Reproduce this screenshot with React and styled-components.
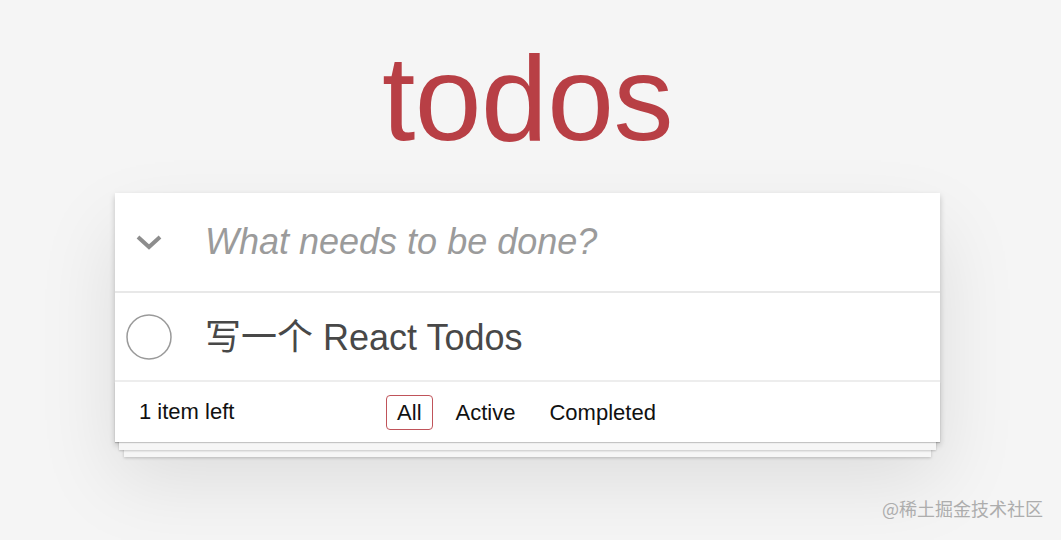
import React from 'react'
import styled, { createGlobalStyle } from 'styled-components'

const GlobalStyle = createGlobalStyle`
  html, body {
    margin: 0;
    padding: 0;
    background: #f5f5f5;
  }
  body {
    font-family: "Liberation Sans", Arial, "Noto Sans CJK SC", sans-serif;
    color: #111;
  }
`

const filters = ['All', 'Active', 'Completed']

function ChevronIcon() {
  return (
    <svg width="26" height="15" viewBox="0 0 26 15">
      <polyline points="2,2 13,12 24,2" fill="none" stroke="#8d8d8d" strokeWidth="4" />
    </svg>
  )
}

function CircleIcon() {
  return (
    <svg width="46" height="46" viewBox="0 0 46 46">
      <circle cx="23" cy="23" r="22" fill="none" stroke="#9a9a9a" strokeWidth="1.5" />
    </svg>
  )
}

export default function App() {
  return (<>
    <GlobalStyle />
    <Page>
      <Title>todos</Title>
      <Card>
        <Header>
          <Gutter><ChevronIcon /></Gutter>
          <NewTodo placeholder="What needs to be done?" />
        </Header>
        <TodoList>
          <Item>
            <Gutter><CircleIcon /></Gutter>
            <Label>写一个 React Todos</Label>
          </Item>
        </TodoList>
        <Footer>
          <Count>1 item left</Count>
          <Filters>
            {filters.map(f => (
              <Filter key={f} selected={f === 'All'}>{f}</Filter>
            ))}
          </Filters>
          <span />
        </Footer>
      </Card>
      <Watermark>@稀土掘金技术社区</Watermark>
    </Page>
  </>)
}

const Page = styled.div`
position:relative;
min-height:540px;
box-sizing:border-box;
padding:38px 6px 0 0;
overflow:hidden;
`
const Title = styled.h1`
margin:0;
height:120px;
font-size:120px;
line-height:120px;
font-weight:400;
text-align:center;
color:#b83f45;
letter-spacing:-0.5px;
`
const Card = styled.section`
width:825px;
margin:35px auto 0;
background:#fff;
box-shadow:0 3px 6px rgba(0,0,0,0.2), 0 37px 75px rgba(0,0,0,0.1);
`
const Header = styled.div`
display:flex;
align-items:center;
height:98px;
border-bottom:2px solid #e8e8e8;
`
const Gutter = styled.div`
width:68px;
margin-right:22px;
display:flex;
align-items:center;
justify-content:center;
flex-shrink:0;
`
const NewTodo = styled.input`
flex:1;
height:100%;
border:none;
outline:none;
background:transparent;
padding:0;
font-family:inherit;
font-size:36px;
color:#4d4d4d;
&::placeholder{
    font-style:italic;
    color:#9b9b9b;
}
`
const TodoList = styled.ul`
margin:0;
padding:0;
list-style:none;
`
const Item = styled.li`
display:flex;
align-items:center;
height:87px;
border-bottom:2px solid #ededed;
`
const Label = styled.span`
font-size:36px;
line-height:40px;
padding-top:2px;
color:#484848;
font-family:"Liberation Sans", Arial, "Noto Sans CJK SC", sans-serif;
`
const Footer = styled.footer`
display:grid;
grid-template-columns:1fr auto 1fr;
align-items:center;
height:60px;
padding:0 22px 0 24px;
font-size:22px;
color:#111;
box-shadow:0 1px 1px rgba(0,0,0,0.2),
    0 12px 0 -4px #f6f6f6,
    0 13px 2px -4px rgba(0,0,0,0.2),
    0 24px 0 -9px #f6f6f6,
    0 25px 3px -9px rgba(0,0,0,0.2);
`
const Count = styled.span``
const Filters = styled.div`
display:flex;
gap:12px;
margin-left:-4px;
`
const Filter = styled.a`
padding:5px 10px;
border:1px solid ${p => p.selected ? '#c0545a' : 'transparent'};
border-radius:4px;
color:#111;
line-height:23px;
`
const Watermark = styled.div`
position:absolute;
right:18px;
bottom:19px;
font-family:"Noto Sans CJK SC", sans-serif;
font-size:18px;
color:#adadad;
`
